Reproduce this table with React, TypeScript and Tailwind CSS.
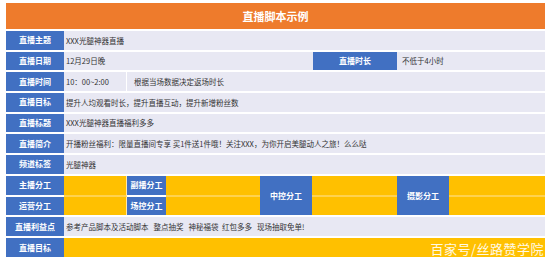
const Label = ({ children }: { children: React.ReactNode }) => (
  <div className="flex items-center justify-center bg-[#4170c2] text-white text-[8px] font-bold">
    {children}
  </div>
);

const Body = ({ children, className = '' }: { children?: React.ReactNode; className?: string }) => (
  <div className={`flex items-center bg-[#e8e8f3] pl-[2px] text-[7.5px] text-[#333] ${className}`}>
    {children}
  </div>
);

const rows = [
  { label: '直播目标', text: '提升人均观看时长，提升直播互动，提升新增粉丝数' },
  { label: '直播标题', text: 'XXX光腿神器直播福利多多' },
  { label: '直播简介', text: '开播粉丝福利：限量直播间专享 买1件送1件哦！关注XXX，为你开启美腿动人之旅！么么哒' },
  { label: '频道标签', text: '光腿神器' },
];

export default function App() {
  return (
    <div
      className="w-[554px] h-[267px] bg-white pt-[3px] pl-[6px]"
      style={{ fontFamily: '"Noto Sans CJK SC", "Noto Sans", sans-serif' }}
    >
      <div className="w-[539px] flex flex-col gap-[2px]">
        <div className="h-[26px] bg-[#ee7b2c] flex items-center justify-center text-white text-[11px] font-bold">
          直播脚本示例
        </div>

        <div className="grid grid-cols-[58px_1fr] h-[18.7px]">
          <Label>直播主题</Label>
          <Body>XXX光腿神器直播</Body>
        </div>

        <div className="grid grid-cols-[58px_249px_84px_1fr] h-[18.7px]">
          <Label>直播日期</Label>
          <Body>12月29日晚</Body>
          <Label>直播时长</Label>
          <Body className="pl-[5px]">不低于4小时</Body>
        </div>

        <div className="grid grid-cols-[58px_63px_1fr] h-[18.7px]">
          <Label>直播时间</Label>
          <Body className="border-r border-white">10：00~2:00</Body>
          <Body className="pl-[7px]">根据当场数据决定返场时长</Body>
        </div>

        {rows.map((r) => (
          <div key={r.label} className="grid grid-cols-[58px_1fr] h-[18.7px]">
            <Label>{r.label}</Label>
            <Body>{r.text}</Body>
          </div>
        ))}

        <div className="grid grid-cols-[58px_63px_39px_94px_52px_85px_52px_96px] grid-rows-[20.7px_18.7px] h-[39.4px]">
          <div className="grid border-b-2 border-white">
            <Label>主播分工</Label>
          </div>
          <div className="bg-[#ffc000] border-b-2 border-[#ffd24f] border-r border-r-[#ffe9a8]" />
          <div className="grid border-b-2 border-white">
            <Label>副播分工</Label>
          </div>
          <div className="bg-[#ffc000] border-b-2 border-[#ffd24f]" />
          <div className="row-span-2 grid">
            <Label>中控分工</Label>
          </div>
          <div className="bg-[#ffc000] border-b-2 border-[#ffd24f]" />
          <div className="row-span-2 grid">
            <Label>摄影分工</Label>
          </div>
          <div className="bg-[#ffc000] border-b-2 border-[#ffd24f]" />

          <Label>运营分工</Label>
          <div className="bg-[#ffc000] border-r border-r-[#ffe9a8]" />
          <Label>场控分工</Label>
          <div className="bg-[#ffc000]" />
          <div className="bg-[#ffc000]" />
          <div className="bg-[#ffc000]" />
        </div>

        <div className="grid grid-cols-[58px_1fr] h-[18.7px]">
          <Label>直播利益点</Label>
          <Body className="whitespace-pre">参考产品脚本及活动脚本   整点抽奖   神秘福袋  红包多多   现场抽取免单!</Body>
        </div>

        <div className="grid grid-cols-[58px_1fr] h-[19.5px]">
          <Label>直播目标</Label>
          <div className="bg-[#ffc000] flex items-end justify-end pr-[1px]">
            <span className="text-white/90 text-[13px] leading-[17px] tracking-[0.5px]">百家号/丝路赞学院</span>
          </div>
        </div>
      </div>
    </div>
  );
}
